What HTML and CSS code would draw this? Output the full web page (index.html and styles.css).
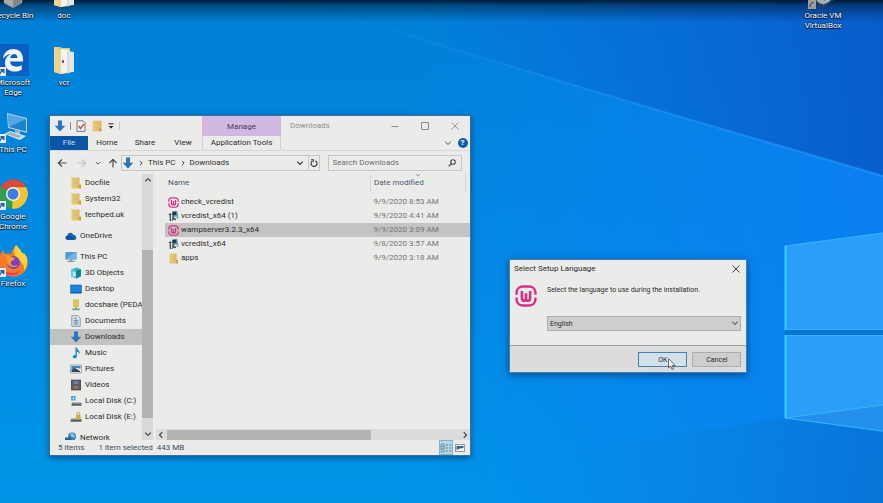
FILE: index.html
```html
<!DOCTYPE html>
<html lang="en">
<head>
<meta charset="utf-8">
<title>Desktop</title>
<link rel="stylesheet" href="styles.css">
</head>
<body>
<svg class="defs" width="0" height="0" aria-hidden="true">
  <defs>
    <linearGradient id="gold" x1="0" x2="1"><stop offset="0" stop-color="#eacb7c"/><stop offset="1" stop-color="#dcb45c"/></linearGradient>
    <symbol id="i-down" viewBox="0 0 12 12"><path d="M4 0.5h4v5.2h3.3L6 11.6 0.7 5.7H4z" fill="#2b76bd"/></symbol>
    <symbol id="i-folder" viewBox="0 0 12 12"><path d="M1.500 .5h8v7.200h1.400v3.800H1.500z" fill="url(#gold)"/><path d="M9.100 7.500h1.800v4H9.100z" fill="#c99c45"/></symbol>
    <symbol id="i-cloud" viewBox="0 0 12 12"><path d="M3 9.8C-.2 9.8-.2 6 2.2 5.8 2.5 2.4 7 1.600 8.200 4.800 11.500 4.500 12.600 9.800 9.500 9.800z" fill="#1467b8"/><path d="M2.200 5.800C4 5 5.500 6 9.800 9.700H3C0 9.700 0 6 2.200 5.800z" fill="#0a4f9c"/></symbol>
    <symbol id="i-pc" viewBox="0 0 12 12"><path d="M.3 1h11.400v7.600H.3z" fill="#7c98ad"/><path d="M1 1.700h10v6.200H1z" fill="#3f9be4"/><path d="M1 7.900L9 1.700h2v6.200z" fill="#69b7f0"/><path d="M4.500 8.600h3v1.400h2.500v1H2v-1h2.500z" fill="#8b9aa6"/></symbol>
    <symbol id="i-cube" viewBox="0 0 12 12"><path d="M1 2.500L6.500.6l4.500 1.700v7L6 11.600l-5-2z" fill="#31b4cf"/><path d="M1 2.500l5 1.300v7.800l-5-2z" fill="#62cde0"/><path d="M6 3.800l5-1.500v7l-5 2.300z" fill="#12809f"/><path d="M3 5l2.500.6v4L3 8.800z" fill="#c9eff5"/></symbol>
    <symbol id="i-desk" viewBox="0 0 12 12"><path d="M.3 1.700h11.400v8.800H.3z" fill="#0b5da8"/><path d="M1 2.300h10V9H1z" fill="#1583e0"/></symbol>
    <symbol id="i-share" viewBox="0 0 12 12"><path d="M3 .5h6v7.500H3z" fill="#e0c04e"/><path d="M5.200 8h1.600v1.500h3v1.800H2.200V9.500h3z" fill="#6fa37b"/></symbol>
    <symbol id="i-doc" viewBox="0 0 12 12"><path d="M1.800.7h6l2.400 2.400v8.200H1.800z" fill="#dfe8ee" stroke="#71889b" stroke-width=".8"/><path d="M3.500 3.500h2M3.500 5.500h5M3.500 7.300h5M3.500 9.200h5M6 2v8" stroke="#4c89b5" stroke-width=".8"/></symbol>
    <symbol id="i-music" viewBox="0 0 12 12"><path d="M5.500.5h1.400c.2 2.500 3.600 3 2.700 6.700-.4-1.500-1.400-2.300-2.700-2.500v4.800c0 2.500-4.400 2.400-4.200.2.100-1.500 1.700-1.900 2.800-1.500z" fill="#1d8ac4"/></symbol>
    <symbol id="i-pic" viewBox="0 0 12 12"><path d="M.5 2h11v8H.5z" fill="#e8eef2" stroke="#8d9aa6" stroke-width=".8"/><path d="M1.500 3h9v2.500L6 5 1.500 7z" fill="#3f85b8"/><path d="M1.500 7L5 5l5 3v1H1.500z" fill="#35495c"/></symbol>
    <symbol id="i-vid" viewBox="0 0 12 12"><path d="M1 .7h10v10.600H1z" fill="#35373e"/><path d="M3.300 1.500h5.400v4H3.300z" fill="#6a86a6"/><path d="M3.300 6.300h5.400v4H3.300z" fill="#8c7358"/><path d="M2.100 1.500v9.500M9.900 1.500v9.500" stroke="#ccc" stroke-width=".9" stroke-dasharray="1 1"/></symbol>
    <symbol id="i-disk" viewBox="0 0 12 12"><path d="M2 7h8l1.500 1.500v2.300h-10z" fill="#555c62"/><path d="M2 7h8l1.500 1.400h-9z" fill="#b8bdc1"/><path d="M1 1h2v2H1zM3.600 1h2v2h-2zM1 3.600h2v2H1zM3.600 3.600h2v2h-2z" fill="#23a3dc"/></symbol>
    <symbol id="i-lock" viewBox="0 0 12 12"><path d="M1 7h9l1.500 1.500v2.300H.5z" fill="#555c62"/><path d="M1 7h9l1.500 1.400H.8z" fill="#b8bdc1"/><path d="M6 3.800h4.600v4.400H6z" fill="#d9ab3a"/><path d="M7 4V2.500c0-1.700 2.600-1.700 2.600 0V4" fill="none" stroke="#c79c3c" stroke-width=".9"/></symbol>
    <symbol id="i-net" viewBox="0 0 12 12"><circle cx="7" cy="4.500" r="4" fill="#3583bd"/><path d="M0 5.500h6v4H0z" fill="#24669d"/><path d="M5 2c2-2 4 0 5 3-2 1-4 0-5-3z" fill="#8fc7e8"/></symbol>
    <symbol id="i-wamp" viewBox="0 0 24 24"><g fill="none" stroke="#d62f86" stroke-width="2.600"><path d="M1.700 10.500V8.500C1.700 4.500 4.500 1.700 8.500 1.700h7c4 0 6.800 2.800 6.800 6.800v2M1.700 13.500v2c0 4 2.800 6.800 6.800 6.800h7c4 0 6.800-2.800 6.800-6.800v-2"/><path d="M7.500 6.500v8c0 3.500 4 3.500 4.500 .5V9v6c.5 3 4.500 3 4.500-.5v-8" stroke-width="2.800"/></g></symbol>
    <symbol id="i-setup" viewBox="0 0 12 12"><path d="M4 1l6-1 1.500 8-5 1z" fill="#5aa2ba"/><path d="M5 .7h4v3.500H5z" fill="#18394c"/><path d="M1 4l1.500-.8V11M4 4h2.500L5 7.500l3.500 2M4 10.500L9.500 6" fill="none" stroke="#343f48" stroke-width="1.300"/><path d="M7 6h3v2H7z" fill="#d9e8ec"/></symbol>
    <symbol id="i-short" viewBox="0 0 9 9"><path d="M0 0h9v9H0z" fill="#e8eef4"/><path d="M2 7.500C2 5 3.500 4 5 4H3.500V2H7.500v4H6V5C4.500 5 3.500 5.800 3.500 7.500z" fill="#2563a8"/></symbol>
    <symbol id="i-chev" viewBox="0 0 8 8"><path d="M1.200 2.700L4 5.500l2.800-2.800" fill="none" stroke="currentColor" stroke-width="1.200"/></symbol>
    <symbol id="i-x" viewBox="0 0 8 8"><path d="M.5.5l7 7M7.500.5l-7 7" stroke="currentColor" stroke-width=".9"/></symbol>
    <symbol id="i-openfolder" viewBox="0 0 32 32"><path d="M6 3h6l2 1h8v25L12 30 6 28z" fill="#e5c87c"/><path d="M13 5l8 1v22l-8 2z" fill="#f5f4ef"/><path d="M20 7l6 1v20l-6 .5z" fill="#e4e7e9"/><path d="M20 7v21" stroke="#c8ccd0"/><path d="M6 3l7 3v24l-7-2z" fill="#edd38d"/><path d="M14 16h2v3h-2z" fill="#506c92"/></symbol>
  </defs>
</svg>

<svg class="wallpaper" viewBox="0 0 883 503" preserveAspectRatio="none" aria-hidden="true">
  <defs>
    <linearGradient id="base" x1="0" y1="0" x2="0" y2="1"><stop offset="0" stop-color="#007fd5"/><stop offset=".5" stop-color="#028ae2"/><stop offset="1" stop-color="#0096e8"/></linearGradient>
    <linearGradient id="east" x1="0" x2="1"><stop offset=".45" stop-color="#0a7ff2" stop-opacity="0"/><stop offset="1" stop-color="#0a7ff2"/></linearGradient>
    <linearGradient id="ne" gradientUnits="userSpaceOnUse" x1="430" y1="110" x2="883" y2="60"><stop offset="0" stop-color="#0757c4" stop-opacity="0"/><stop offset="1" stop-color="#0757c4" stop-opacity=".85"/></linearGradient>
    <linearGradient id="se" gradientUnits="userSpaceOnUse" x1="560" y1="440" x2="883" y2="490"><stop offset="0" stop-color="#0788de" stop-opacity="0"/><stop offset="1" stop-color="#0874d8"/></linearGradient>
    <linearGradient id="ray" gradientUnits="userSpaceOnUse" x1="290" y1="0" x2="883" y2="176"><stop offset="0" stop-color="#1c9cf4" stop-opacity="0"/><stop offset=".6" stop-color="#259af8" stop-opacity=".5"/><stop offset="1" stop-color="#259af8" stop-opacity=".65"/></linearGradient>
    <linearGradient id="shade" x1="0" y1="0" x2="0" y2="1"><stop offset="0" stop-color="#00162c" stop-opacity=".95"/><stop offset=".25" stop-color="#00162c" stop-opacity=".5"/><stop offset="1" stop-color="#00162c" stop-opacity="0"/></linearGradient>
  </defs>
  <path d="M0 0h883v503H0z" fill="url(#base)"/>
  <path d="M0 0h883v503H0z" fill="url(#east)"/>
  <path d="M290 0h593v176L640 105z" fill="url(#ne)"/>
  <path d="M290 0L640 105 883 176" fill="none" stroke="url(#ray)" stroke-width="2"/>
  <path d="M480 464L785 418l98 14v71H480z" fill="url(#se)"/>
  <path d="M785 246l98-13v97h-98zM785 335h98v96l-98-13z" fill="#2a9ef8"/>
  <path d="M785 330h98v5h-98z" fill="#0a72da"/>
  <path d="M785 418l98-13v26z" fill="#2390ee"/>
  <path d="M785 418l98-13M785 418l98 13M785 335.500h98M785 329.500h98M785 246l98-13" fill="none" stroke="#35b6fa" stroke-width="1"/>
  <path d="M785.500 246v84M785.500 335v83" stroke="#35d0f8" stroke-width="2"/>
  <path d="M0 0h883v22H0z" fill="url(#shade)"/>
</svg>

<main class="desktop">
  <ul class="icons icons-left">
    <li><a href="#"><svg viewBox="0 0 32 32"><path d="M5 4l11-2 11 3-2 21-9 5-9-5z" fill="#a9a9a6"/><path d="M16 10l10-4-2 20-8 5z" fill="#84878a"/></svg><span>Recycle Bin</span></a></li>
    <li><a href="#"><svg viewBox="0 0 32 32"><use href="#i-openfolder"/></svg><span>doc</span></a></li>
    <li><a href="#"><svg viewBox="0 0 32 32"><path d="M0 0h32v32H0z" fill="#0a5fc2"/><path d="M6 14.500C7 7 13 4.500 18 5.200c6 .8 8.500 6 8 12.300H13c.5 5.500 7.500 6.500 11.700 3.500v4.700C18 29.500 8 27.500 8 19c0-4.500 2.500-7.500 6-9-3.500.5-6 2.200-8 4.500zM13.200 14h7.300c0-5.500-6.500-5.300-7.300 0z" fill="#f2f5f8"/><use href="#i-short" x="0" y="23" width="9" height="9"/></svg><span>Microsoft Edge</span></a></li>
    <li><a href="#"><svg viewBox="0 0 32 32"><use href="#i-openfolder"/></svg><span>vcr</span></a></li>
    <li><a href="#"><svg viewBox="0 0 32 32"><path d="M10 2l20 5v15l-19-5z" fill="#b5cfe0"/><path d="M11 3.500l18 4.500v12.500L12 16z" fill="#1f82cf"/><path d="M11 3.500l18 4.500L12 16z" fill="#55a9e2"/><path d="M18 19l5 1v4l-5-1z" fill="#9fb7c7"/><path d="M7 23l6-3 16 5-6 4z" fill="#d6e4ec"/><path d="M9 23l4-2 12 4-3 2z" fill="#9db5c4"/><use href="#i-short" x="0" y="23" width="9" height="9"/></svg><span>This PC</span></a></li>
    <li class="blank" aria-hidden="true"></li>
    <li><a href="#"><svg viewBox="0 0 32 32"><path d="M16 16L3.500 8.800A14.800 14.800 0 0 1 29 9z" fill="#d84a3a"/><path d="M16 16L3.500 8.800A14.800 14.800 0 0 0 15 30.800z" fill="#31a050"/><path d="M16 16L29 9A14.800 14.800 0 0 1 15 30.800z" fill="#f3c334"/><path d="M16 9.200h13L22 18z" fill="#f3c334"/><path d="M16 9h13A15 15 0 0 0 16 1.200z" fill="#d84a3a"/><circle cx="16" cy="16" r="7" fill="#f0f0f0"/><circle cx="16" cy="16" r="5.500" fill="#3b7de0"/><use href="#i-short" x="0" y="23" width="9" height="9"/></svg><span>Google Chrome</span></a></li>
    <li class="blank" aria-hidden="true"></li>
    <li><a href="#"><svg viewBox="0 0 32 32"><path d="M19 0c2 3 5 4 6 8 2 0 4 2 5 5 3 9-3 18-13 18.500C8 32 1 26 1 17c0-4 1.500-7 3-9l2-3 2 4c2-1 5-.5 6 0 1-4 3-6 5-9z" fill="#f57a26"/><path d="M19 0c2 3 5 4 6 8 2 0 4 2 5 5 1 6-1 10-3 13 1-8-5-10-8-14-2-3-3-6 0-12z" fill="#ffd13b"/><path d="M3 20c2 7 12 10 20 6-4 7-19 6-20-6z" fill="#ef3f55"/><circle cx="16.500" cy="17.500" r="6.500" fill="#7a3fc4"/><path d="M8 10c3-1 5 0 6 2l4 1c0 2-3 2-4 4-1 3 3 5 7 3-3 4-10 2-11-3-.5-3 0-5-2-7z" fill="#f9962f"/><use href="#i-short" x="0" y="23" width="9" height="9"/></svg><span>Firefox</span></a></li>
  </ul>

  <ul class="icons icons-right">
    <li><a href="#"><svg viewBox="0 0 32 32"><path d="M5 8l11-6 11 6v15l-11 8-11-8z" fill="#2d4058"/><path d="M9 20c4 8 11 7 15 0M13 20l4 6 5-6" fill="none" stroke="#a8b2bd" stroke-width="2.500"/><path d="M1 23h8v9H1z" fill="#9c9c9c"/><path d="M3 30c0-3 1-4 3-4v-1" fill="none" stroke="#333"/></svg><span>Oracle VM VirtualBox</span></a></li>
  </ul>

  <section class="explorer" aria-label="Downloads">
    <header class="titlebar">
      <div class="quick">
        <svg class="ic" viewBox="0 0 12 12"><use href="#i-down"/></svg>
        <i class="bar"></i>
        <button type="button" aria-label="Properties"><svg class="ic" viewBox="0 0 12 12"><path d="M2 .8h6l2 2v8.600H2z" fill="#f1f1f0" stroke="#6d6d6d" stroke-width=".9"/><path d="M3.500 6l2 2.500L9 4" fill="none" stroke="#c75a30" stroke-width="1.400"/></svg></button>
        <button type="button" aria-label="New folder"><svg class="ic" viewBox="0 0 12 12"><path d="M1.500 .7h9v10.600h-9z" fill="url(#gold)"/><path d="M8.500 8.500h2v2.800h-2z" fill="#c99c45"/></svg></button>
        <button type="button" aria-label="Customize toolbar"><svg class="ic small" viewBox="0 0 8 8"><path d="M1.500 1.800h5" stroke="#222"/><path d="M1.500 4h5L4 6.500z" fill="#222"/></svg></button>
        <i class="bar pale"></i>
      </div>
      <div class="manage">Manage</div>
      <h1>Downloads</h1>
      <div class="controls">
        <button type="button" aria-label="Minimize"><svg viewBox="0 0 8 8"><path d="M.5 4.500h7" stroke="currentColor"/></svg></button>
        <button type="button" aria-label="Maximize"><svg viewBox="0 0 8 8"><path d="M.5.5h7v7h-7z" fill="none" stroke="currentColor"/></svg></button>
        <button type="button" aria-label="Close"><svg viewBox="0 0 8 8"><use href="#i-x"/></svg></button>
      </div>
    </header>
    <nav class="ribbon">
      <button type="button" class="file">File</button>
      <button type="button">Home</button>
      <button type="button">Share</button>
      <button type="button">View</button>
      <button type="button" class="tools">Application Tools</button>
      <span class="help">
        <svg class="ic small" viewBox="0 0 8 8"><use href="#i-chev"/></svg>
        <button type="button" aria-label="Help">?</button>
      </span>
    </nav>
    <div class="navbar">
      <button type="button" aria-label="Back"><svg class="arrow" viewBox="0 0 10 10"><path d="M5 1.500L1.300 5 5 8.500M1.300 5H9.500" fill="none" stroke="#4c4c4c" stroke-width="1.200"/></svg></button>
      <button type="button" aria-label="Forward"><svg class="arrow" viewBox="0 0 10 10"><path d="M5 1.500L8.700 5 5 8.500M8.700 5H.5" fill="none" stroke="#c3c3c3" stroke-width="1.200"/></svg></button>
      <button type="button" class="narrow" aria-label="Recent"><svg class="tiny" viewBox="0 0 8 8"><use href="#i-chev"/></svg></button>
      <button type="button" class="up" aria-label="Up"><svg class="arrow" viewBox="0 0 10 10"><path d="M1.500 5L5 1.300 8.500 5M5 1.300V9.500" fill="none" stroke="#4c4c4c" stroke-width="1.200"/></svg></button>
      <div class="address">
        <svg class="ic" viewBox="0 0 12 12"><use href="#i-down"/></svg>
        <svg class="tiny side" viewBox="0 0 8 8"><use href="#i-chev"/></svg>
        <a href="#">This PC</a>
        <svg class="tiny side" viewBox="0 0 8 8"><use href="#i-chev"/></svg>
        <a href="#">Downloads</a>
        <button type="button" class="drop" aria-label="Previous locations"><svg viewBox="0 0 8 8"><use href="#i-chev"/></svg></button>
        <button type="button" class="refresh" aria-label="Refresh"><svg viewBox="0 0 8 8"><path d="M5.500 1.800A3 3 0 1 1 2 2.200M1 .8h2.300v2.400" fill="none" stroke="currentColor" stroke-width="1.100"/></svg></button>
      </div>
      <label class="search"><input type="text" aria-label="Search Downloads" placeholder="Search Downloads"><svg viewBox="0 0 8 8"><circle cx="5" cy="3" r="2.300" fill="none" stroke="currentColor" stroke-width="1.100"/><path d="M3.400 4.600L.6 7.400" stroke="currentColor" stroke-width="1.300"/></svg></label>
    </div>
    <div class="panes">
      <nav class="tree">
        <ul>
          <li class="sub"><a href="#"><svg class="ic" viewBox="0 0 12 12"><use href="#i-folder"/></svg>Docfile</a></li>
          <li class="sub"><a href="#"><svg class="ic" viewBox="0 0 12 12"><use href="#i-folder"/></svg>System32</a></li>
          <li class="sub"><a href="#"><svg class="ic" viewBox="0 0 12 12"><use href="#i-folder"/></svg>techped.uk</a></li>
          <li class="root"><a href="#"><svg class="ic" viewBox="0 0 12 12"><use href="#i-cloud"/></svg>OneDrive</a></li>
          <li class="root"><a href="#"><svg class="ic" viewBox="0 0 12 12"><use href="#i-pc"/></svg>This PC</a></li>
          <li class="sub"><a href="#"><svg class="ic" viewBox="0 0 12 12"><use href="#i-cube"/></svg>3D Objects</a></li>
          <li class="sub"><a href="#"><svg class="ic" viewBox="0 0 12 12"><use href="#i-desk"/></svg>Desktop</a></li>
          <li class="sub"><a href="#"><svg class="ic" viewBox="0 0 12 12"><use href="#i-share"/></svg>docshare (PEDAL</a></li>
          <li class="sub"><a href="#"><svg class="ic" viewBox="0 0 12 12"><use href="#i-doc"/></svg>Documents</a></li>
          <li class="sub current"><a href="#"><svg class="ic" viewBox="0 0 12 12"><use href="#i-down"/></svg>Downloads</a></li>
          <li class="sub"><a href="#"><svg class="ic" viewBox="0 0 12 12"><use href="#i-music"/></svg>Music</a></li>
          <li class="sub"><a href="#"><svg class="ic" viewBox="0 0 12 12"><use href="#i-pic"/></svg>Pictures</a></li>
          <li class="sub"><a href="#"><svg class="ic" viewBox="0 0 12 12"><use href="#i-vid"/></svg>Videos</a></li>
          <li class="sub"><a href="#"><svg class="ic" viewBox="0 0 12 12"><use href="#i-disk"/></svg>Local Disk (C:)</a></li>
          <li class="sub"><a href="#"><svg class="ic" viewBox="0 0 12 12"><use href="#i-lock"/></svg>Local Disk (E:)</a></li>
          <li class="root"><a href="#"><svg class="ic" viewBox="0 0 12 12"><use href="#i-net"/></svg>Network</a></li>
        </ul>
      </nav>
      <div class="vscroll" aria-hidden="true">
        <svg class="flip" viewBox="0 0 8 8"><use href="#i-chev"/></svg>
        <div class="track"><div class="thumb"></div></div>
        <svg viewBox="0 0 8 8"><use href="#i-chev"/></svg>
      </div>
      <div class="content">
        <table>
          <thead><tr><th class="name">Name</th><th class="date">Date modified<svg class="tiny sort" viewBox="0 0 8 8"><use href="#i-chev"/></svg></th><th class="rest"></th></tr></thead>
          <tbody>
            <tr><td><span class="entry"><svg viewBox="0 0 24 24"><use href="#i-wamp"/></svg>check_vcredist</span></td><td class="when">9/9/2020 8:53 AM</td><td></td></tr>
            <tr><td><span class="entry"><svg viewBox="0 0 12 12"><use href="#i-setup"/></svg>vcredist_x64 (1)</span></td><td class="when">9/9/2020 4:41 AM</td><td></td></tr>
            <tr class="selected"><td><span class="entry"><svg viewBox="0 0 24 24"><use href="#i-wamp"/></svg>wampserver3.2.3_x64</span></td><td class="when">9/9/2020 3:09 AM</td><td></td></tr>
            <tr><td><span class="entry"><svg viewBox="0 0 12 12"><use href="#i-setup"/></svg>vcredist_x64</span></td><td class="when">9/8/2020 3:57 AM</td><td></td></tr>
            <tr><td><span class="entry"><svg viewBox="0 0 12 12"><use href="#i-folder"/></svg>apps</span></td><td class="when">9/9/2020 3:18 AM</td><td></td></tr>
          </tbody>
        </table>
        <div class="hscroll" aria-hidden="true">
          <svg class="left" viewBox="0 0 8 8"><use href="#i-chev"/></svg>
          <div class="track"><div class="thumb"></div></div>
          <svg class="side" viewBox="0 0 8 8"><use href="#i-chev"/></svg>
        </div>
      </div>
    </div>
    <footer class="status">
      <span>5 items</span><span class="picked">1 item selected</span><span class="size">443 MB</span>
      <button type="button" class="view on" aria-label="Details view"><svg viewBox="0 0 12 10"><path d="M1 1h3v8H1zM1 3.500h3M1 6h3" fill="none" stroke="#56818f" stroke-width=".8"/><path d="M5.500 2h2.500M9 2h2.500M5.500 5h2.500M9 5h2.500M5.500 8h2.500M9 8h2.500" stroke="#56818f"/></svg></button>
      <button type="button" class="view" aria-label="Large icons view"><svg viewBox="0 0 12 10"><path d="M1.500 1.500h9v7h-9z" fill="#f2f4f5" stroke="#8d979e"/><path d="M2.500 3h7v2l-4 .5-3 1.500z" fill="#37678d"/></svg></button>
    </footer>
  </section>

  <form class="dialog" role="dialog" aria-label="Select Setup Language">
    <header><h2>Select Setup Language</h2><button type="button" aria-label="Close"><svg viewBox="0 0 8 8"><use href="#i-x"/></svg></button></header>
    <div class="message">
      <svg viewBox="0 0 24 24"><use href="#i-wamp"/></svg>
      <div class="fields">
        <label for="lang">Select the language to use during the installation.</label>
        <div class="pick"><select id="lang"><option>English</option></select><svg viewBox="0 0 8 8"><use href="#i-chev"/></svg></div>
      </div>
    </div>
    <div class="actions">
      <button type="button" class="ok">OK</button>
      <button type="button">Cancel</button>
    </div>
    <svg class="cursor" viewBox="0 0 8 12"><path d="M.6.8v9L2.700 8l1.400 3.300 1.500-.7L4.200 7.400h2.900z" fill="#fff" stroke="#222" stroke-width=".7"/></svg>
  </form>
</main>
</body>
</html>
```
FILE: styles.css
```css
* { box-sizing: border-box; }
html, body { margin: 0; height: 100%; overflow: hidden; }
body { font: 8px/10px Roboto, "Noto Sans", sans-serif; color: #2b2b2b; background: #0087dd; }
ul { list-style: none; margin: 0; padding: 0; }
a { color: inherit; text-decoration: none; }
h1, h2 { margin: 0; font-size: 8px; font-weight: 400; }
button, input, select { font: inherit; color: inherit; border: 0; padding: 0; margin: 0; background: none; border-radius: 0; }
svg { display: block; flex: none; }
.defs { position: absolute; }
.wallpaper { position: absolute; inset: 0; width: 100%; height: 100%; }
.desktop { position: relative; height: 100%; overflow: hidden; }

.ic { width: 12px; height: 12px; }
.small { width: 8px; height: 8px; }
.tiny { width: 6px; height: 6px; }
.side { transform: rotate(-90deg); }
.left { transform: rotate(90deg); }
.flip { transform: rotate(180deg); }

/* Desktop shortcuts */
.icons { position: absolute; top: -23px; display: grid; grid-auto-rows: 67px; color: #fff; text-align: center; text-shadow: 0 1px 1px #000, 0 0 2px #000; }
.icons-left { left: -12px; grid-template-columns: 50px 52px; }
.icons-right { right: 35px; grid-template-columns: 50px; }
.icons a { display: flex; flex-direction: column; align-items: center; gap: 2px; }
.icons svg { width: 32px; height: 32px; }

/* Explorer window */
.explorer { position: absolute; left: 49px; top: 115px; width: calc(50% - 20px); background: #ebebea; border: 1px solid #39719c; box-shadow: 0 2px 6px rgba(0, 20, 60, .5); }
.titlebar { display: flex; height: 20px; align-items: center; }
.quick { display: flex; align-items: center; gap: 4px; width: 152px; padding-left: 4px; }
.bar { width: 1px; height: 8px; background: #8a8a8a; }
.bar.pale { background: #c4c4c4; }
.manage { align-self: stretch; width: 79px; padding-top: 6px; background: #d0b8e0; color: #4d3c58; text-align: center; }
.titlebar h1 { flex: 1; padding-left: 9px; color: #8d8d8d; }
.controls { display: flex; color: #8a8a8a; }
.controls button { display: grid; place-items: center; width: 30px; height: 18px; }
.controls svg { width: 8px; height: 8px; }

.ribbon { display: flex; height: 15px; border-bottom: 1px solid #d6d6d6; }
.ribbon > button { width: 38px; }
.ribbon .file { background: #0a56a5; color: #c9dff2; }
.ribbon .tools { width: 79px; border: solid #d2cdd6; border-width: 0 1px; white-space: nowrap; }
.help { display: flex; align-items: center; gap: 6px; margin-left: auto; padding-right: 2px; color: #8a8a8a; }
.help button { width: 10px; height: 10px; border-radius: 50%; background: #0c5cb0; color: #fff; font-weight: 700; line-height: 10px; }

.navbar { display: flex; align-items: center; height: 23px; padding: 0 8px 0 2px; color: #4c4c4c; }
.navbar > button { display: grid; place-items: center; width: 20px; }
.navbar .narrow { width: 12px; }
.navbar .up { width: 17px; }
.arrow { width: 10px; height: 10px; }
.address { display: flex; flex: 8; align-items: center; gap: 4px; height: 16px; border: 1px solid #c6c6c6; color: #333; }
.address .drop { margin-left: auto; }
.address svg:not([class]) { width: 8px; height: 8px; }
.address .refresh { align-self: stretch; padding: 0 1px; border-left: 1px solid #c6c6c6; }
.search { display: flex; flex: 5; align-items: center; height: 16px; margin-left: 8px; padding: 0 5px 0 4px; border: 1px solid #c6c6c6; }
.search input { flex: 1; min-width: 0; outline: 0; }
.search input::placeholder { color: #6e6e6e; opacity: 1; }
.search svg { width: 8px; height: 8px; }

.panes { display: flex; height: 266px; }
.tree { width: 92px; padding-top: 1px; overflow: hidden; white-space: nowrap; }
.tree a { display: flex; align-items: center; gap: 3px; height: 16px; padding-left: 20px; }
.tree .root a { padding-left: 15px; }
.tree .root { margin-top: 5px; }
.tree .current { background: #c2c2c2; }
.vscroll { display: flex; flex-direction: column; align-items: center; width: 11px; padding: 2px 0; background: #d9d9d9; color: #444; }
.vscroll svg, .hscroll svg { width: 8px; height: 8px; }
.vscroll .track { display: flex; flex: 1; width: 100%; flex-direction: column; padding: 66px 0 12px; }
.vscroll .thumb { flex: 1; background: #b3b3b3; }
.content { display: flex; flex: 1; flex-direction: column; min-width: 0; padding-left: 3px; }
table { width: calc(100% - 9px); margin-left: 9px; border-collapse: collapse; table-layout: fixed; }
th { position: relative; height: 18px; padding: 0 0 0 3px; text-align: left; font-weight: 400; color: #4a5870; border-right: 1px solid #d3d3d3; }
.rest { width: 4px; border: 0; }
.date { width: 95px; }
thead::after { content: ""; display: block; height: 3px; }
.sort { position: absolute; left: 44px; top: -2px; color: #888; }
td { height: 14px; padding: 0 0 0 3px; white-space: nowrap; }
.entry { display: flex; align-items: center; gap: 2px; }
.entry svg { width: 11px; height: 11px; }
.when { color: #747474; }
.selected { background: #c3c3c3; }
.hscroll { display: flex; align-items: center; height: 11px; margin-top: auto; padding: 0 1px; background: #dcdcdb; color: #444; }
.hscroll .track { flex: 1; height: 10px; margin: 0 2px; }
.hscroll .thumb { width: 70%; height: 100%; background: #b3b3b3; }

.status { display: flex; align-items: center; height: 15px; padding: 0 3px 0 8px; color: #3b4a5c; }
.picked { margin-left: 14px; }
.size { margin-left: 4px; }
.view { display: grid; place-items: center; width: 14px; height: 15px; }
.view svg { width: 12px; height: 10px; }
.size + .view { margin-left: auto; }
.view.on { background: #b9d9e8; border: 1px solid #7fb4cf; }

/* Setup language dialog */
.dialog { position: absolute; left: 509px; top: 259px; width: 27%; background: #ebebea; border: 1px solid #3b83b8; box-shadow: 0 2px 7px rgba(0, 20, 60, .55); }
.dialog header { display: flex; align-items: center; justify-content: space-between; height: 18px; padding: 0 6px 0 4px; }
.dialog header svg { width: 8px; height: 8px; }
.message { display: flex; gap: 10px; padding: 7px 5px 14px; }
.message > svg { width: 22px; height: 22px; }
.fields { flex: 1; }
.fields label { display: block; margin-bottom: 21px; white-space: nowrap; font-size: 7px; }
.pick { position: relative; font-size: 7px; }
.pick select { appearance: none; display: block; width: 100%; height: 15px; padding-left: 2px; background: #cecece; border: 1px solid #aeaeae; }
.pick svg { position: absolute; right: 2px; top: 3px; width: 8px; height: 8px; color: #666; pointer-events: none; }
.actions { display: flex; justify-content: flex-end; gap: 5px; padding: 6px 5px 5px; background: #dcdcdb; border-top: 1px solid #a2a2a2; font-size: 7px; }
.actions button { width: 49px; height: 15px; background: #cecece; border: 1px solid #adadad; }
.actions .ok { background: #d3e0ea; border-color: #3d84b4; }
.cursor { position: absolute; left: 158px; top: 98px; width: 8px; height: 12px; }
```
